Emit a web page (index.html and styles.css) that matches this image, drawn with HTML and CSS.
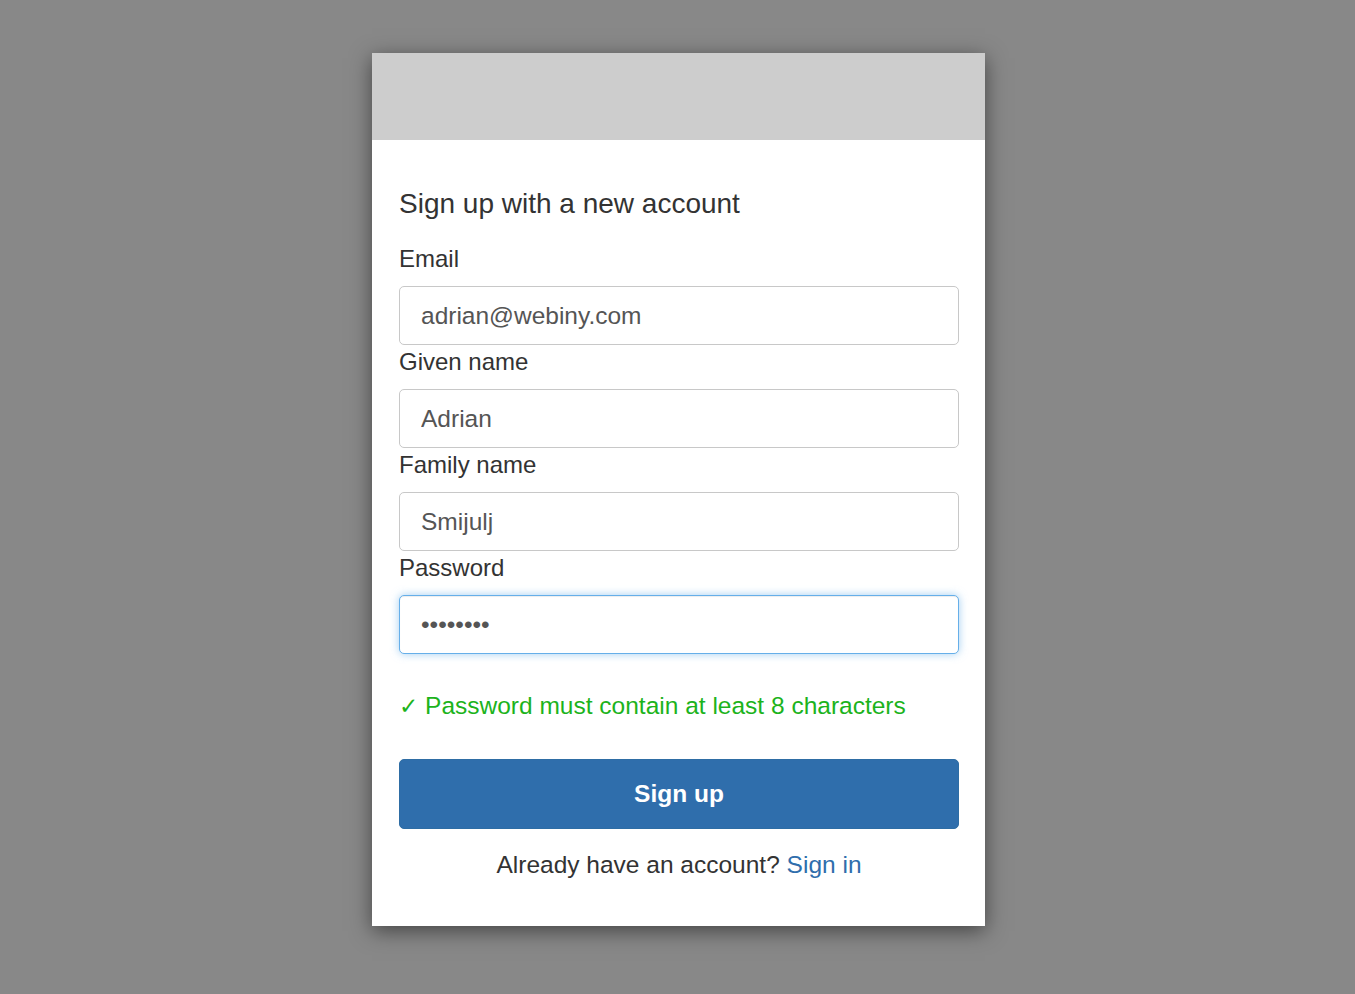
FILE: index.html
```html
<!DOCTYPE html>
<html lang="en">
<head>
    <meta charset="UTF-8">
    <meta name="viewport" content="width=device-width, initial-scale=1.0">
    <title>Sign up</title>
    <link rel="stylesheet" href="styles.css">
</head>
<body>

<div class="card">
    <!-- Header -->
    <div class="card-header"></div>

    <div class="card-body">
        <h2 class="title">Sign up with a new account</h2>

        <div class="field">
            <label for="email">Email</label>
            <input type="text" id="email" value="adrian@webiny.com">
        </div>

        <div class="field">
            <label for="givenName">Given name</label>
            <input type="text" id="givenName" value="Adrian">
        </div>

        <div class="field">
            <label for="familyName">Family name</label>
            <input type="text" id="familyName" value="Smijulj">
        </div>

        <div class="field">
            <label for="password">Password</label>
            <input type="password" id="password" class="focused" value="12345678">
        </div>

        <p class="hint"><span class="check">&#10003;</span> Password must contain at least 8 characters</p>

        <button class="btn-primary">Sign up</button>

        <p class="switch">Already have an account? <a href="#">Sign in</a></p>
    </div>
</div>

</body>
</html>
```

FILE: styles.css
```css
body {
    font-family: 'Liberation Sans', Arial, sans-serif;
    background-color: #888888;
    color: #333;
    margin: 0;
    padding: 53px 0 40px 2px;
}
.card {
    width: 613px;
    margin: 0 auto;
    background: #fff;
    box-shadow: 0 5px 20px rgba(0, 0, 0, 0.5);
}
.card-header {
    height: 87px;
    background-color: #cdcdcd;
}
.card-body {
    padding: 48px 26px 47px 27px;
}
.title {
    margin: 0 0 25px;
    font-size: 28px;
    line-height: 32px;
    font-weight: normal;
}
.field {
    margin-bottom: 3px;
}
label {
    display: block;
    font-size: 24px;
    line-height: 28px;
    margin-bottom: 13px;
}
input {
    display: block;
    box-sizing: border-box;
    width: 100%;
    height: 59px;
    padding: 0 21px;
    border: 1px solid #c8c8c8;
    border-radius: 5px;
    font-family: inherit;
    font-size: 24.5px;
    color: #555;
    outline: none;
}
input.focused {
    border-color: #66afe9;
    box-shadow: inset 0 1px 1px rgba(0, 0, 0, 0.075), 0 0 8px rgba(102, 175, 233, 0.6);
}
.hint {
    margin: 38px 0 39px;
    font-size: 24.5px;
    line-height: 28px;
    color: #1cb31c;
}
.check {
    font-family: 'DejaVu Sans', sans-serif;
    font-size: 23px;
}
.btn-primary {
    display: block;
    width: 100%;
    height: 70px;
    border: 1px solid #2e6da4;
    border-radius: 5px;
    background-color: #2f6eac;
    color: #fff;
    font-family: inherit;
    font-size: 24.5px;
    font-weight: bold;
    cursor: pointer;
}
.switch {
    margin: 22px 0 0;
    text-align: center;
    font-size: 24.5px;
    line-height: 28px;
}
.switch a {
    color: #2f6eac;
    text-decoration: none;
}
```
